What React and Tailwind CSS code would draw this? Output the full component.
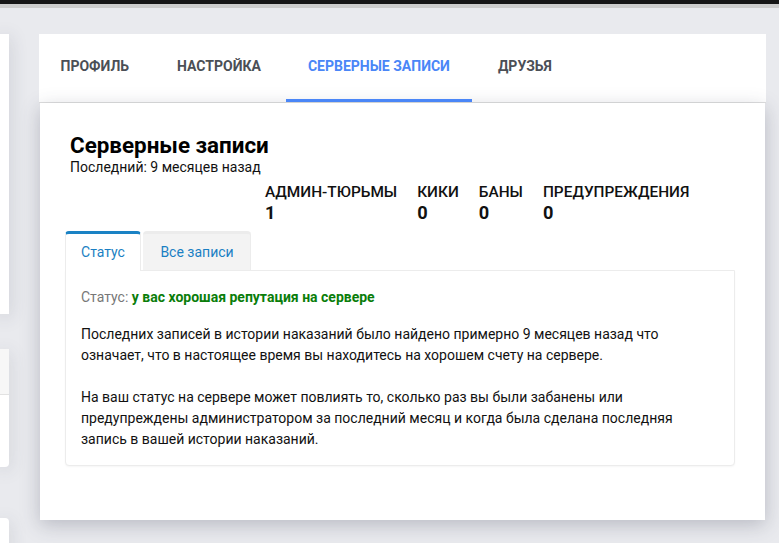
const stats = [
  { label: 'АДМИН-ТЮРЬМЫ', value: '1' },
  { label: 'КИКИ', value: '0' },
  { label: 'БАНЫ', value: '0' },
  { label: 'ПРЕДУПРЕЖДЕНИЯ', value: '0' },
]

function App() {
  return (
    <div className="w-[779px] h-[543px] overflow-hidden bg-[#e9eaee] font-['Roboto',sans-serif]">
      <div className="h-1 bg-[#161616]"></div>
      <div className="h-1 bg-[#cccccc]"></div>

      <div className="flex pt-[26px]">
        <div className="w-[9px] shrink-0">
          <div className="h-[280px] bg-white shadow-[0_3px_18px_rgba(60,65,85,0.22)]"></div>
          <div className="h-[118px] mt-[35px] bg-white rounded-r shadow-[0_3px_18px_rgba(60,65,85,0.18)]">
            <div className="h-[46px] bg-[#f7f7f7] border-b border-[#e2e2e2]"></div>
          </div>
          <div className="h-[40px] mt-[51px] bg-white rounded-tr shadow-[0_3px_18px_rgba(60,65,85,0.18)]"></div>
        </div>

        <div className="w-[727px] ml-[30px]">
          <div className="h-[69px] bg-white border-b border-[#dfdfdf] flex gap-1">
            <div className="h-[68px] pl-[21.5px] pr-[22.5px] pb-[4px] flex items-center text-[14px] font-bold text-[#4b4f56]">ПРОФИЛЬ</div>
            <div className="h-[68px] px-[21.5px] pb-[4px] flex items-center text-[14px] font-bold text-[#4b4f56]">НАСТРОЙКА</div>
            <div className="h-[68px] pl-[21.5px] pr-[22.5px] pb-[1px] flex items-center text-[14px] font-bold text-[#4a86f7] border-b-[3px] border-[#4a86f7]">СЕРВЕРНЫЕ ЗАПИСИ</div>
            <div className="h-[68px] px-[21.5px] pb-[4px] flex items-center text-[14px] font-bold text-[#4b4f56]">ДРУЗЬЯ</div>
          </div>

          <div className="h-[417px] mx-px bg-white shadow-[0_5px_18px_rgba(60,65,85,0.28)] pt-[28px] px-[25px]">
            <div className="pl-[5px]">
              <h1 className="text-[22.4px] leading-[28px] font-bold text-black">Серверные записи</h1>
              <p className="text-[14px] leading-[16px] text-[#111111]">Последний: 9 месяцев назад</p>
            </div>

            <div className="flex gap-5 pl-[200px] mt-[8px]">
              {stats.map((stat) => (
                <div key={stat.label}>
                  <div className="text-[15.4px] leading-[19px] font-medium text-[#111111]">{stat.label}</div>
                  <div className="text-[18.2px] leading-[22px] font-bold text-[#111111]">{stat.value}</div>
                </div>
              ))}
            </div>

            <div className="flex gap-[2px] mt-[7px] h-[40px] relative z-10">
              <div className="w-[76px] h-[40px] bg-white border-t-[3px] border-x border-t-[#1a82c4] border-x-[#ececec] rounded-t flex items-center justify-center text-[14px] text-[#1a7fc3]">
                Статус
              </div>
              <div className="w-[108px] h-[39px] pl-[1px] bg-[#f3f3f3] border-t-[3px] border-r border-[#ececec] rounded-t flex items-center justify-center text-[14px] text-[#1a7fc3]">
                Все записи
              </div>
            </div>

            <div className="w-[670px] h-[196px] -mt-px bg-white border border-[#ececec] rounded-b shadow-[0_1px_2px_rgba(0,0,0,0.04)] pt-[16px] px-[15px] text-[14px] leading-[21px] text-[#111111]">
              <p>
                <span className="text-[#777777]">Статус: </span>
                <span className="font-bold text-[#0a7d0a]">у вас хорошая репутация на сервере</span>
              </p>
              <p className="mt-[16px]">
                Последних записей в истории наказаний было найдено примерно 9 месяцев назад что
                <br />
                означает, что в настоящее время вы находитесь на хорошем счету на сервере.
              </p>
              <p className="mt-[21px]">
                На ваш статус на сервере может повлиять то, сколько раз вы были забанены или
                <br />
                предупреждены администратором за последний месяц и когда была сделана последняя
                <br />
                запись в вашей истории наказаний.
              </p>
            </div>
          </div>
        </div>
      </div>
    </div>
  )
}

export default App
